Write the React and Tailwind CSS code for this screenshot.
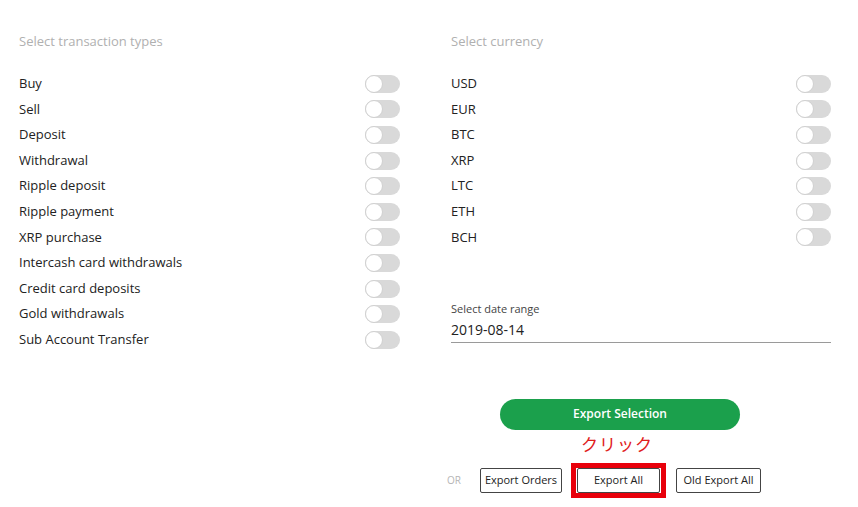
import React from "react";

const TYPES = [
  "Buy",
  "Sell",
  "Deposit",
  "Withdrawal",
  "Ripple deposit",
  "Ripple payment",
  "XRP purchase",
  "Intercash card withdrawals",
  "Credit card deposits",
  "Gold withdrawals",
  "Sub Account Transfer",
];

const CURRENCIES = ["USD", "EUR", "BTC", "XRP", "LTC", "ETH", "BCH"];

function Toggle() {
  return (
    <div className="w-[35px] h-[18px] rounded-full bg-[#d9d9d9] flex items-center">
      <div className="w-[18px] h-[18px] rounded-full bg-white border border-[#d0d0d0]" />
    </div>
  );
}

function ToggleRow({ label }) {
  return (
    <div className="h-[25.6px] flex items-center justify-between">
      <span className="text-[13px] text-[#222]">{label}</span>
      <Toggle />
    </div>
  );
}

function OutlineButton({ children, className = "" }) {
  return (
    <button
      className={
        "h-[25px] border border-[#444] rounded-[2px] bg-white text-[11px] text-[#222] flex items-center justify-center " +
        className
      }
    >
      {children}
    </button>
  );
}

export default function App() {
  return (
    <div
      className="w-[858px] h-[507px] bg-white flex pl-[19px] pt-[31px]"
      style={{ fontFamily: '"Open Sans", "Noto Sans CJK JP", sans-serif' }}
    >
      {/* transaction types */}
      <div className="w-[381px] flex flex-col">
        <div className="h-[20px] leading-[20px] text-[13px] text-[#b0b0b0] mb-[20px]">
          Select transaction types
        </div>
        {TYPES.map((t) => (
          <ToggleRow key={t} label={t} />
        ))}
      </div>

      {/* currency + export */}
      <div className="w-[380px] ml-[51px] flex flex-col">
        <div className="h-[20px] leading-[20px] text-[13px] text-[#b0b0b0] mb-[20px]">
          Select currency
        </div>
        {CURRENCIES.map((c) => (
          <ToggleRow key={c} label={c} />
        ))}

        <div className="mt-[50.6px] text-[11px] leading-[16px] text-[#444]">
          Select date range
        </div>
        <div className="mt-[3px] text-[14px] leading-[20px] text-[#222] pb-[2px] border-b border-[#9a9a9a]">
          2019-08-14
        </div>

        <button className="mt-[56px] ml-[49px] w-[240px] h-[31px] rounded-full bg-[#1ba04c] text-white text-[12px] font-semibold">
          Export Selection
        </button>

        <div className="mt-[5px] ml-[130px] h-[20px] leading-[20px] text-[17px] tracking-[1px] text-[#e0201c]">
          クリック
        </div>

        <div className="mt-[8px] -ml-[4px] flex items-center">
          <span className="text-[10px] text-[#b5b5b5] w-[15px]">OR</span>
          <OutlineButton className="ml-[18px] w-[82px]">Export Orders</OutlineButton>
          <div className="ml-[9px] border-[5px] border-[#e8000b] px-[1px]">
            <OutlineButton className="w-[83px]">Export All</OutlineButton>
          </div>
          <OutlineButton className="ml-[10px] w-[85px]">Old Export All</OutlineButton>
        </div>
      </div>
    </div>
  );
}
